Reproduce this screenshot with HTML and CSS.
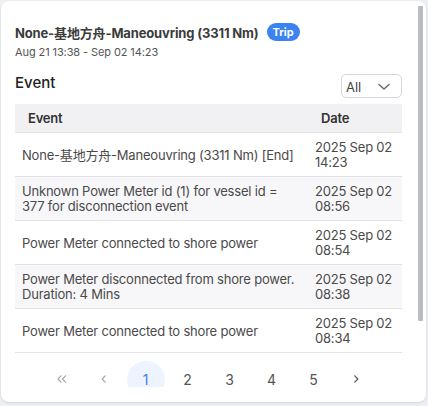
FILE: index.html
```html
<!DOCTYPE html>
<html>
<head>
<meta charset="utf-8">
<link rel="stylesheet" href="styles.css">
</head>
<body>
<div class="card">
  <div class="scroll">
    <div class="title-row">
      <span class="title">None-基地方舟-Maneouvring (3311 Nm)</span>
      <span class="badge">Trip</span>
    </div>
    <div class="subtitle">Aug 21 13:38 - Sep 02 14:23</div>
    <div class="section-head">
      <h2 class="section-title">Event</h2>
      <div class="select">
        <span>All</span>
        <svg class="chev" width="12" height="8" viewBox="0 0 12 8"><path d="M1 1.5 L6 6 L11 1.5" fill="none" stroke="#666" stroke-width="1.4" stroke-linecap="round" stroke-linejoin="round"/></svg>
      </div>
    </div>
    <table class="events">
      <colgroup><col class="col-event"><col class="col-date"></colgroup>
      <thead>
        <tr><th>Event</th><th>Date</th></tr>
      </thead>
      <tbody>
        <tr><td>None-基地方舟-Maneouvring (3311 Nm) [End]</td><td>2025 Sep 02<br>14:23</td></tr>
        <tr class="alt"><td>Unknown Power Meter id (1) for vessel id = 377 for disconnection event</td><td>2025 Sep 02<br>08:56</td></tr>
        <tr><td>Power Meter connected to shore power</td><td>2025 Sep 02<br>08:54</td></tr>
        <tr class="alt"><td>Power Meter disconnected from shore power. Duration: 4 Mins</td><td>2025 Sep 02<br>08:38</td></tr>
        <tr><td>Power Meter connected to shore power</td><td>2025 Sep 02<br>08:34</td></tr>
      </tbody>
    </table>
    <nav class="pager">
      <span class="pg muted"><svg width="10" height="8" viewBox="0 0 10 8"><path d="M4 0.8 L1 4 L4 7.2 M8.5 0.8 L5.5 4 L8.5 7.2" fill="none" stroke="currentColor" stroke-width="1.2" stroke-linecap="round" stroke-linejoin="round"/></svg></span>
      <span class="pg muted"><svg width="6" height="8" viewBox="0 0 6 8"><path d="M4.2 0.8 L1.2 4 L4.2 7.2" fill="none" stroke="currentColor" stroke-width="1.2" stroke-linecap="round" stroke-linejoin="round"/></svg></span>
      <span class="pg active">1</span>
      <span class="pg">2</span>
      <span class="pg">3</span>
      <span class="pg">4</span>
      <span class="pg">5</span>
      <span class="pg"><svg width="6" height="8" viewBox="0 0 6 8"><path d="M1.8 0.8 L4.8 4 L1.8 7.2" fill="none" stroke="currentColor" stroke-width="1.2" stroke-linecap="round" stroke-linejoin="round"/></svg></span>
    </nav>
  </div>
  <div class="thumb"></div>
</div>
</body>
</html>
```
FILE: styles.css
```css
html, body {
  margin: 0;
  padding: 0;
}
body {
  background: #eef0f3;
  font-family: Inter, "Noto Sans CJK SC", sans-serif;
  width: 428px;
  height: 406px;
  overflow: hidden;
}
.card {
  position: relative;
  margin: 1px 0 0 1px;
  width: 425px;
  height: 401px;
  background: #fff;
  border-radius: 8px;
  box-shadow: 0 1px 3px rgba(0,0,0,0.12);
  padding: 5px 3px 15px 0;
  box-sizing: border-box;
}
.scroll {
  height: 381px;
  overflow: hidden;
  padding: 16px 21px 0 14px;
  box-sizing: border-box;
}
.thumb {
  position: absolute;
  left: 417px;
  top: 5px;
  width: 5px;
  height: 315px;
  background: #b9bdc3;
  border-radius: 1px;
}
.title-row {
  display: flex;
  align-items: center;
  height: 20px;
  gap: 8px;
}
.title {
  font-weight: 700;
  font-size: 13px;
  color: #3b3b3b;
  letter-spacing: -0.15px;
}
.badge {
  background: #3c82f0;
  color: #fff;
  font-weight: 700;
  font-size: 11px;
  height: 18px;
  line-height: 18px;
  padding: 0 6px;
  border-radius: 9px;
}
.subtitle {
  margin-top: 3px;
  font-size: 11px;
  line-height: 14px;
  color: #555;
  letter-spacing: -0.1px;
}
.section-head {
  margin-top: 15px;
  display: flex;
  justify-content: space-between;
  align-items: flex-start;
}
.section-title {
  margin: 0;
  font-size: 15px;
  line-height: 18px;
  font-weight: 500;
  color: #222;
}
.select {
  width: 61px;
  height: 24px;
  box-sizing: border-box;
  border: 1px solid #d5d7db;
  border-radius: 5px;
  display: flex;
  align-items: center;
  justify-content: space-between;
  padding: 1px 11px 0 4px;
  font-size: 13px;
  color: #444;
}
.events {
  margin-top: 6px;
  width: 387px;
  table-layout: fixed;
  border-collapse: collapse;
  font-size: 13px;
  letter-spacing: -0.2px;
  color: #4a4a4a;
}
.col-event {
  width: 293px;
}
.col-date {
  width: 94px;
}
.events th {
  background: #f1f1f3;
  height: 28px;
  padding: 0 13px;
  text-align: left;
  font-weight: 600;
  color: #333;
  border-bottom: 1px solid #e3e3e6;
}
.events td {
  padding: 7px 7px 6px;
  line-height: 15px;
  vertical-align: middle;
  border-bottom: 1px solid #e3e3e6;
}
.events tr.alt td {
  background: #f7f7f9;
}
.pager {
  margin-top: 8px;
  display: flex;
  justify-content: center;
  gap: 4px;
}
.pg {
  width: 38px;
  height: 38px;
  border-radius: 50%;
  display: flex;
  align-items: center;
  justify-content: center;
  padding-bottom: 2px;
  box-sizing: border-box;
  font-size: 14px;
  color: #555;
}
.pg.muted {
  color: #a4a8ae;
}
.pg.active {
  background: #edf3ff;
  color: #3c82f0;
}
```
